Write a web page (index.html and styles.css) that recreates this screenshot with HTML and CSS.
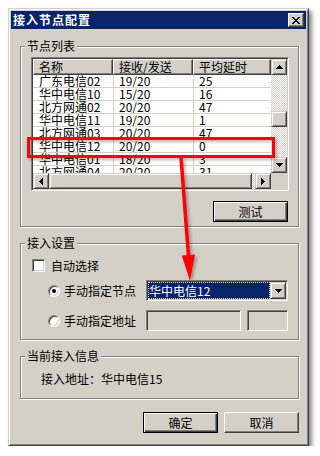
FILE: index.html
```html
<!DOCTYPE html>
<html lang="zh-CN">
<head>
<meta charset="utf-8">
<title>接入节点配置</title>
<link rel="stylesheet" href="styles.css">
</head>
<body>
<div class="window">
  <div class="titlebar">
    <span class="title">接入节点配置</span>
    <span class="close"><svg width="8" height="7" viewBox="0 0 8 7" shape-rendering="crispEdges"><path d="M0 0h2v1H0zM6 0h2v1H6zM1 1h2v1H1zM5 1h2v1H5zM2 2h4v1H2zM3 3h2v1H3zM2 4h4v1H2zM1 5h2v1H1zM5 5h2v1H5zM0 6h2v1H0zM6 6h2v1H6z"/></svg></span>
  </div>
  <div class="client">
    <div class="group g1">
      <div class="legend">节点列表</div>
      <div class="listview">
        <div class="lv-main">
          <div class="lv-head">
            <div class="hcell c1">名称</div>
            <div class="hcell c2">接收/发送</div>
            <div class="hcell c3">平均延时</div>
          </div>
          <div class="lv-row"><div class="cell c1">广东电信02</div><div class="cell c2">19/20</div><div class="cell c3">25</div></div>
          <div class="lv-row"><div class="cell c1">华中电信10</div><div class="cell c2">15/20</div><div class="cell c3">16</div></div>
          <div class="lv-row"><div class="cell c1">北方网通02</div><div class="cell c2">20/20</div><div class="cell c3">47</div></div>
          <div class="lv-row"><div class="cell c1">华中电信11</div><div class="cell c2">19/20</div><div class="cell c3">1</div></div>
          <div class="lv-row"><div class="cell c1">北方网通03</div><div class="cell c2">20/20</div><div class="cell c3">47</div></div>
          <div class="lv-row"><div class="cell c1">华中电信12</div><div class="cell c2">20/20</div><div class="cell c3">0</div></div>
          <div class="lv-row"><div class="cell c1">华中电信01</div><div class="cell c2">18/20</div><div class="cell c3">3</div></div>
          <div class="lv-row"><div class="cell c1">北方网通04</div><div class="cell c2">20/20</div><div class="cell c3">31</div></div>
        </div>
        <div class="vscroll">
          <div class="sbtn"><svg width="7" height="4" viewBox="0 0 7 4" shape-rendering="crispEdges"><path d="M3 0h1v1h1v1h1v1h1v1H0V3h1V2h1V1h1z"/></svg></div>
          <div class="track"><div class="thumb vthumb"></div></div>
          <div class="sbtn"><svg width="7" height="4" viewBox="0 0 7 4" shape-rendering="crispEdges"><path d="M0 0h7v1H6v1H5v1H4v1H3V3H2V2H1V1H0z"/></svg></div>
        </div>
        <div class="hscroll">
          <div class="sbtn"><svg width="4" height="7" viewBox="0 0 4 7" shape-rendering="crispEdges"><path d="M3 0h1v7H3V6H2V5H1V4H0V3h1V2h1V1h1z"/></svg></div>
          <div class="track htrack"><div class="thumb hthumb"></div></div>
          <div class="sbtn"><svg width="4" height="7" viewBox="0 0 4 7" shape-rendering="crispEdges"><path d="M0 0h1v1h1v1h1v1h1v1H3v1H2v1H1v1H0z"/></svg></div>
        </div>
        <div class="corner"></div>
      </div>
      <div class="g1-actions"><button class="btn default" type="button">测试</button></div>
    </div>

    <div class="group g2">
      <div class="legend">接入设置</div>
      <div class="check-row"><span class="checkbox"></span><span>自动选择</span></div>
      <div class="opt-row r1">
        <div class="radio-label"><span class="radio on"></span><span>手动指定节点</span></div>
        <div class="combo">
          <div class="combo-value">华中电信12</div>
          <div class="sbtn combo-btn"><svg width="7" height="4" viewBox="0 0 7 4" shape-rendering="crispEdges"><path d="M0 0h7v1H6v1H5v1H4v1H3V3H2V2H1V1H0z"/></svg></div>
        </div>
      </div>
      <div class="opt-row r2">
        <div class="radio-label"><span class="radio"></span><span>手动指定地址</span></div>
        <div class="edit e1"></div>
        <div class="edit e2"></div>
      </div>
    </div>

    <div class="group g3">
      <div class="legend">当前接入信息</div>
      <div class="info">接入地址：华中电信15</div>
    </div>

    <div class="dlg-buttons">
      <button class="btn default" type="button">确定</button>
      <button class="btn" type="button">取消</button>
    </div>
  </div>
</div>

<svg class="annot" width="320" height="456" viewBox="0 0 320 456">
  <defs>
    <filter id="sh" x="-20%" y="-20%" width="140%" height="140%">
      <feDropShadow dx="2" dy="2" stdDeviation="1.5" flood-color="#000" flood-opacity="0.3"/>
    </filter>
  </defs>
  <g filter="url(#sh)" fill="none" stroke="#ff0000">
    <rect x="28.5" y="138.5" width="245" height="18" stroke-width="3"/>
    <line x1="181" y1="157" x2="188.6" y2="257" stroke-width="3.5"/>
    <polygon points="181.8,255.5 195,254.5 190,281" fill="#ff0000" stroke="none"/>
  </g>
</svg>
</body>
</html>
```

FILE: styles.css
```css
body {
  margin: 0;
  background: #fff;
  font: 12px "Noto Sans CJK SC", "Liberation Sans", sans-serif;
  color: #000;
}

.window {
  box-sizing: border-box;
  width: 301px;
  height: 438px;
  margin: 8px 0 0 8px;
  padding: 2px;
  background: #d4d0c8;
  border: 1px solid;
  border-color: #d4d0c8 #404040 #404040 #d4d0c8;
  box-shadow: inset 1px 1px #fff, inset -1px -1px #808080, 3px 3px 4px rgba(0, 0, 0, 0.45);
}

.titlebar {
  height: 18px;
  background: #0a246a;
  color: #fff;
  display: flex;
  align-items: center;
  justify-content: space-between;
}

.title {
  font-weight: bold;
  padding-left: 2px;
  line-height: 18px;
  letter-spacing: 1px;
}

.close {
  box-sizing: border-box;
  width: 16px;
  height: 14px;
  margin-right: 2px;
  background: #d4d0c8;
  border: 1px solid;
  border-color: #fff #404040 #404040 #fff;
  box-shadow: inset -1px -1px #808080;
  display: flex;
  align-items: center;
  justify-content: center;
}

.close svg { display: block; }

.client {
  padding-left: 9px;
}

.group {
  box-sizing: border-box;
  width: 279px;
  border: 1px solid #808080;
  box-shadow: inset 1px 1px #fff, 1px 1px #fff;
  padding: 0 10px;
}

.legend {
  width: max-content;
  height: 14px;
  margin: -8px 0 0 -6px;
  padding: 0 2px;
  line-height: 14px;
  background: #d4d0c8;
  white-space: nowrap;
}

.g1 {
  margin-top: 17px;
  padding-bottom: 4px;
}

/* list view */
.listview {
  box-sizing: border-box;
  width: 258px;
  height: 134px;
  margin-top: 4px;
  padding: 1px;
  background: #fff;
  border: 1px solid;
  border-color: #808080 #fff #fff #808080;
  box-shadow: inset 1px 1px #404040, inset -1px -1px #d4d0c8;
  display: grid;
  grid-template-columns: 238px 16px;
  grid-template-rows: 114px 16px;
}

.lv-main {
  overflow: hidden;
}

.lv-head {
  display: flex;
  height: 16px;
}

.hcell {
  box-sizing: border-box;
  height: 16px;
  flex: none;
  background: #d4d0c8;
  border: 1px solid;
  border-color: #fff #404040 #404040 #fff;
  box-shadow: inset -1px -1px #808080;
  padding-left: 5px;
  line-height: 13px;
  white-space: nowrap;
  overflow: hidden;
}

.lv-row {
  display: flex;
  height: 13px;
}

.cell {
  box-sizing: border-box;
  flex: none;
  height: 13px;
  border-bottom: 1px solid #d4d0c8;
  line-height: 12px;
  padding-left: 6px;
  white-space: nowrap;
  overflow: hidden;
}

.cell.c2, .cell.c3 {
  border-left: 1px solid #d4d0c8;
  padding-left: 5px;
}

.c1, .c2 { width: 80px; }
.c3 { width: 78px; }

/* scrollbars */
.vscroll {
  display: flex;
  flex-direction: column;
}

.hscroll {
  display: flex;
}

.sbtn, .thumb {
  box-sizing: border-box;
  flex: none;
  width: 16px;
  height: 16px;
  background: #d4d0c8;
  border: 1px solid;
  border-color: #d4d0c8 #404040 #404040 #d4d0c8;
  box-shadow: inset 1px 1px #fff, inset -1px -1px #808080;
}

.sbtn {
  display: flex;
  align-items: center;
  justify-content: center;
}

.sbtn svg { display: block; }

.track {
  flex: 1;
  background-color: #fff;
  background-image: conic-gradient(#d4d0c8 25%, #fff 0 50%, #d4d0c8 0 75%, #fff 0);
  background-size: 2px 2px;
}

.vthumb {
  margin-top: 36px;
}

.htrack {
  display: flex;
}

.hthumb {
  width: 203px;
}

.corner {
  background: #d4d0c8;
}

/* buttons */
.g1-actions {
  display: flex;
  justify-content: flex-end;
  margin-top: 10px;
}

.btn {
  box-sizing: border-box;
  width: 75px;
  height: 21px;
  padding: 0;
  font: inherit;
  line-height: 17px;
  color: #000;
  background: #d4d0c8;
  border: 1px solid;
  border-color: #fff #404040 #404040 #fff;
  box-shadow: inset -1px -1px #808080;
}

.btn.default {
  border-color: #000;
  box-shadow: inset 1px 1px #fff, inset -1px -1px #404040, inset -2px -2px #808080;
}

/* access settings */
.g2 {
  margin-top: 16px;
  padding-bottom: 8px;
}

.check-row {
  display: flex;
  align-items: center;
  gap: 6px;
  height: 13px;
  margin: 9px 0 0 1px;
  line-height: 13px;
}

.checkbox {
  box-sizing: border-box;
  width: 13px;
  height: 13px;
  background: #fff;
  border: 1px solid;
  border-color: #808080 #fff #fff #808080;
  box-shadow: inset 1px 1px #404040, inset -1px -1px #d4d0c8;
}

.opt-row {
  display: flex;
  align-items: center;
  height: 21px;
  margin-left: 17px;
}

.r1 { margin-top: 8px; }
.r2 { margin-top: 9px; }

.radio-label {
  width: 98px;
  display: flex;
  align-items: center;
  gap: 4px;
  white-space: nowrap;
}

.radio {
  box-sizing: border-box;
  flex: none;
  width: 12px;
  height: 12px;
  border-radius: 50%;
  background: #fff;
  border: 1px solid;
  border-color: #808080 #fff #fff #808080;
  box-shadow: inset 1px 1px #404040, inset -1px -1px #d4d0c8;
  display: flex;
  align-items: center;
  justify-content: center;
}

.radio.on::after {
  content: "";
  width: 4px;
  height: 4px;
  border-radius: 50%;
  background: #000;
}

.combo {
  box-sizing: border-box;
  width: 142px;
  height: 21px;
  padding: 1px;
  display: flex;
  background: #fff;
  border: 1px solid;
  border-color: #808080 #fff #fff #808080;
  box-shadow: inset 1px 1px #404040, inset -1px -1px #d4d0c8;
}

.combo-value {
  flex: 1;
  background: #0a246a;
  color: #fff;
  border: 1px dotted #e8d898;
  line-height: 15px;
  white-space: nowrap;
  overflow: hidden;
}

.combo-btn {
  height: 17px;
}

.edit {
  box-sizing: border-box;
  height: 21px;
  background: #d4d0c8;
  border: 1px solid;
  border-color: #808080 #fff #fff #808080;
  box-shadow: inset 1px 1px #404040, inset -1px -1px #d4d0c8;
}

.e1 { width: 95px; }
.e2 { width: 41px; margin-left: 6px; }

/* current info */
.g3 {
  margin-top: 16px;
  padding-bottom: 12px;
}

.info {
  margin: 9px 0 0 10px;
  line-height: 14px;
}

.dlg-buttons {
  width: 279px;
  margin-top: 13px;
  display: flex;
  justify-content: flex-end;
  gap: 6px;
}

/* annotation overlay */
.annot {
  position: absolute;
  left: 0;
  top: 0;
  pointer-events: none;
}
```
